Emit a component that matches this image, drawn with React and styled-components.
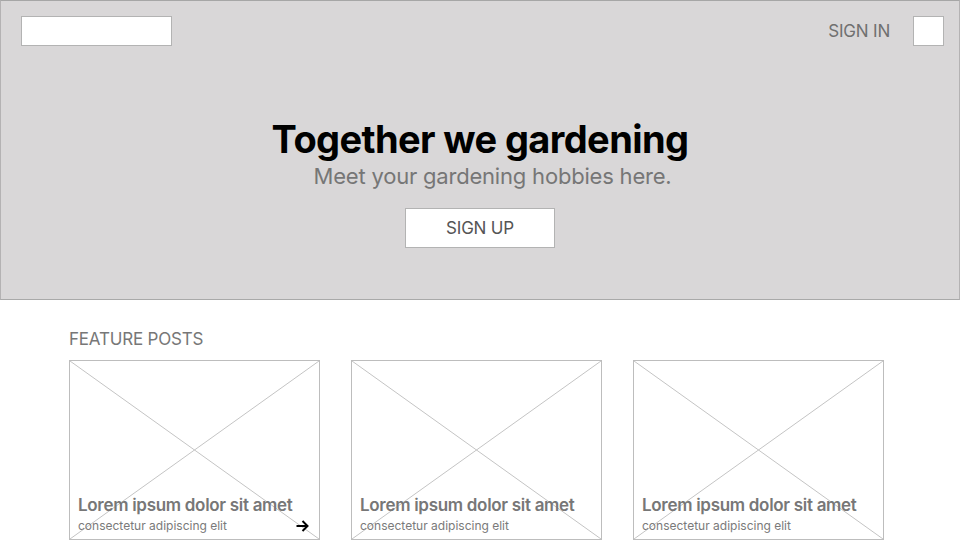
import React from 'react';
import styled, { createGlobalStyle } from 'styled-components';

const GlobalStyle = createGlobalStyle`
  html, body {
    margin: 0;
    padding: 0;
    background: #ffffff;
    font-family: Inter, "Liberation Sans", sans-serif;
  }
`;

const Page = styled.div`
  width: 960px;
  height: 540px;
  overflow: hidden;
`;

const Hero = styled.header`
  box-sizing: border-box;
  height: 300px;
  background: #d9d7d8;
  border: 1px solid #b4b2b3;
  border-top-color: #a6a6a6;
  border-bottom-color: #a9a9a9;
  display: flex;
  flex-direction: column;
  align-items: center;
`;

const TopBar = styled.div`
  align-self: stretch;
  display: flex;
  align-items: center;
  justify-content: space-between;
  padding: 15px 15px 0 20px;
`;

const Box = styled.div`
  box-sizing: border-box;
  width: ${p => p.w}px;
  height: 30px;
  background: #ffffff;
  border: 1px solid #b3b3b3;
`;

const Right = styled.div`
  display: flex;
  align-items: center;
  gap: 23px;
`;

const SignIn = styled.span`
  font-size: 17px;
  color: #707070;
  letter-spacing: -0.2px;
`;

const Title = styled.h1`
  margin: 70px 0 0;
  font-size: 38px;
  line-height: 46px;
  font-weight: 700;
  color: #000;
  letter-spacing: -0.6px;
`;

const Subtitle = styled.p`
  margin: 0;
  padding-left: 25px;
  font-size: 22px;
  line-height: 28px;
  color: #767676;
  letter-spacing: -0.2px;
`;

const SignUp = styled.button`
  box-sizing: border-box;
  margin-top: 18px;
  width: 150px;
  height: 40px;
  background: #fff;
  border: 1px solid #b3b3b3;
  font-family: inherit;
  font-size: 17px;
  color: #555;
  letter-spacing: -0.2px;
`;

const Section = styled.section`
  padding: 28px 0 0 69px;
`;

const SectionLabel = styled.h2`
  margin: 0 0 10px;
  font-size: 17px;
  line-height: 22px;
  font-weight: 400;
  color: #777;
  letter-spacing: -0.2px;
`;

const Cards = styled.div`
  display: flex;
  gap: 31px;
`;

const Card = styled.div`
  position: relative;
  box-sizing: border-box;
  width: 251px;
  height: 180px;
  border: 1px solid #bdbdbd;
  display: flex;
  flex-direction: column;
  justify-content: flex-end;
  padding: 0 10px 3px 8px;
`;

const Cross = styled.svg`
  position: absolute;
  inset: 0;
  width: 100%;
  height: 100%;
`;

const CardTitle = styled.div`
  position: relative;
  font-size: 17px;
  line-height: 22px;
  font-weight: 600;
  color: #777;
  letter-spacing: -0.3px;
`;

const CardText = styled.div`
  position: relative;
  display: flex;
  justify-content: space-between;
  align-items: center;
  font-size: 12px;
  line-height: 20px;
  color: #7a7a7a;
`;

const Arrow = () => (
  <svg width="13" height="12" viewBox="0 0 13 12">
    <path d="M0.5 6h11M6.5 1L11.5 6l-5 5" fill="none" stroke="#000" strokeWidth="2" />
  </svg>
);

const posts = [{ arrow: true }, {}, {}];

export default function App() {
  return (
    <Page>
      <GlobalStyle />
      <Hero>
        <TopBar>
          <Box w={151} />
          <Right>
            <SignIn>SIGN IN</SignIn>
            <Box w={31} />
          </Right>
        </TopBar>
        <Title>Together we gardening</Title>
        <Subtitle>Meet your gardening hobbies here.</Subtitle>
        <SignUp>SIGN UP</SignUp>
      </Hero>
      <Section>
        <SectionLabel>FEATURE POSTS</SectionLabel>
        <Cards>
          {posts.map((p, i) => (
            <Card key={i}>
              <Cross preserveAspectRatio="none" viewBox="0 0 100 100">
                <line x1="0" y1="0" x2="100" y2="100" stroke="#c4c4c4" strokeWidth="1" vectorEffect="non-scaling-stroke" />
                <line x1="100" y1="0" x2="0" y2="100" stroke="#c4c4c4" strokeWidth="1" vectorEffect="non-scaling-stroke" />
              </Cross>
              <CardTitle>Lorem ipsum dolor sit amet</CardTitle>
              <CardText>
                consectetur adipiscing elit
                {p.arrow && <Arrow />}
              </CardText>
            </Card>
          ))}
        </Cards>
      </Section>
    </Page>
  );
}
